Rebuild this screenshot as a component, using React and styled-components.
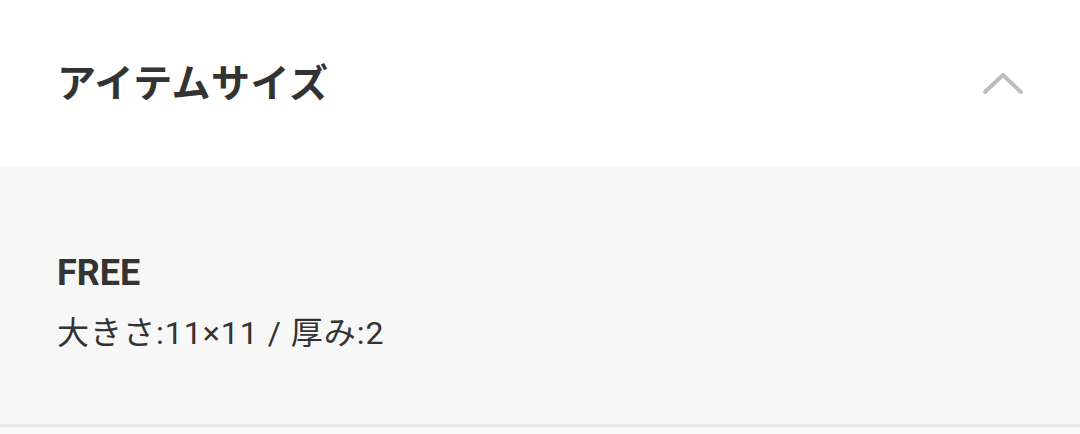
import React from "react";
import styled, { createGlobalStyle } from "styled-components";

const Global = createGlobalStyle`
  html, body { margin: 0; padding: 0; background: #fafafa; }
  body { font-family: Roboto, "Noto Sans CJK JP", sans-serif; color: #333; }
`;

const Section = styled.section`
  width: 1080px;
  background: #fff;
  border-bottom: 3px solid #e8e8e8;
`;

const Header = styled.div`
  height: 166px;
  display: flex;
  align-items: center;
  justify-content: space-between;
  padding: 0 56px 0 57px;
  box-sizing: border-box;
`;

const Title = styled.h2`
  margin: 0;
  font-family: "Noto Sans CJK JP", sans-serif;
  font-size: 39px;
  font-weight: 700;
  color: #333;
  line-height: 1;
  letter-spacing: 0.5px;
  position: relative;
  top: -3px;
`;

const Chevron = styled.svg`
  width: 42px;
  height: 26px;
  display: block;
`;

const Body = styled.div`
  background: #f7f7f7;
  height: 258px;
  box-sizing: border-box;
  padding: 16px 57px 0;
  display: flex;
  flex-direction: column;
  justify-content: center;
  gap: 14px;
`;

const Size = styled.div`
  font-family: Roboto, "Noto Sans CJK JP", sans-serif;
  font-size: 36px;
  font-weight: 700;
  line-height: 46px;
  color: #333;
`;

const Detail = styled.div`
  font-family: Roboto, "Noto Sans CJK JP", sans-serif;
  font-size: 32px;
  font-weight: 400;
  line-height: 46px;
  letter-spacing: 1px;
  color: #333;
`;

export default function App() {
  return (
    <>
      <Global />
      <Section>
        <Header>
          <Title>アイテムサイズ</Title>
          <Chevron viewBox="0 0 42 26" fill="none">
            <path
              d="M3 22 L21 5 L39 22"
              stroke="#bdbdbd"
              strokeWidth="4"
              strokeLinecap="round"
              strokeLinejoin="round"
            />
          </Chevron>
        </Header>
        <Body>
          <Size>FREE</Size>
          <Detail>大きさ:11×11 / 厚み:2</Detail>
        </Body>
      </Section>
    </>
  );
}
